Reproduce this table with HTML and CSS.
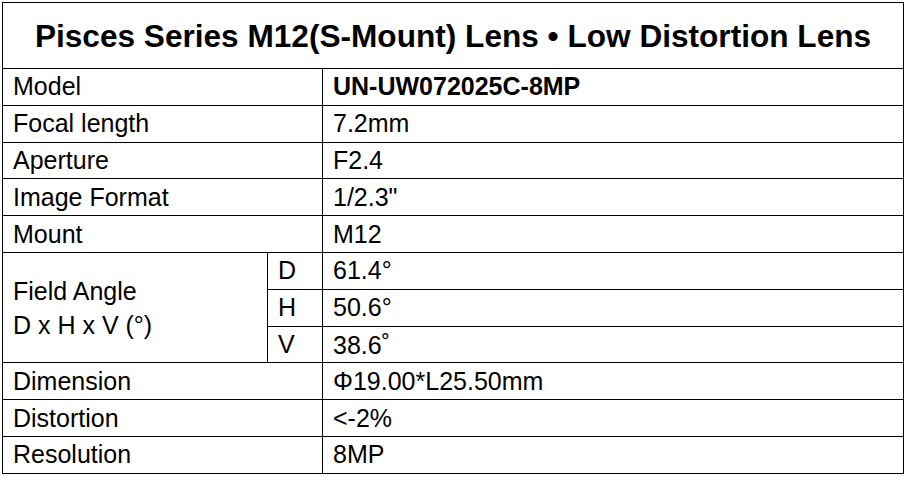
FILE: index.html
```html
<!DOCTYPE html>
<html>
<head>
<meta charset="utf-8">
<link rel="stylesheet" href="styles.css">
</head>
<body>
<table class="spec">
  <colgroup>
    <col class="c1"><col class="c2"><col class="c3">
  </colgroup>
  <tr class="title-row"><th colspan="3" class="title">Pisces Series M12(S-Mount) Lens • Low Distortion Lens</th></tr>
  <tr><td colspan="2">Model</td><td class="bold">UN-UW072025C-8MP</td></tr>
  <tr><td colspan="2">Focal length</td><td>7.2mm</td></tr>
  <tr><td colspan="2">Aperture</td><td>F2.4</td></tr>
  <tr><td colspan="2">Image Format</td><td>1/2.3"</td></tr>
  <tr><td colspan="2">Mount</td><td>M12</td></tr>
  <tr><td rowspan="3" class="multi">Field Angle<br>D x H x V (°)</td><td>D</td><td>61.4°</td></tr>
  <tr><td>H</td><td>50.6°</td></tr>
  <tr><td>V</td><td>38.6<span class="ring">˚</span></td></tr>
  <tr><td colspan="2">Dimension</td><td>Φ19.00*L25.50mm</td></tr>
  <tr><td colspan="2">Distortion</td><td>&lt;-2%</td></tr>
  <tr><td colspan="2">Resolution</td><td>8MP</td></tr>
</table>
</body>
</html>
```

FILE: styles.css
```css
html, body {
  margin: 0;
  padding: 0;
  background: #fff;
}
body {
  padding: 2px 0 0 2px;
  font-family: "Liberation Sans", Arial, "Noto Sans CJK SC", sans-serif;
  color: #000;
}
.spec {
  border-collapse: collapse;
  width: 901px;
  table-layout: fixed;
}
.c1 { width: 265px; }
.c2 { width: 55px; }
.c3 { width: 581px; }
.spec th, .spec td {
  border: 1px solid #000;
  padding: 0 10px;
  font-size: 25px;
  line-height: 29px;
  height: 36.8px;
  text-align: left;
  vertical-align: middle;
  font-weight: normal;
  box-sizing: border-box;
}
.spec td.multi { line-height: 34px; }
.spec .title {
  height: 66px;
  text-align: center;
  font-weight: bold;
  font-size: 31.6px;
  line-height: 36px;
}
.spec td.bold { font-weight: bold; }
.ring { font-family: "Noto Sans CJK SC", sans-serif; }
```
